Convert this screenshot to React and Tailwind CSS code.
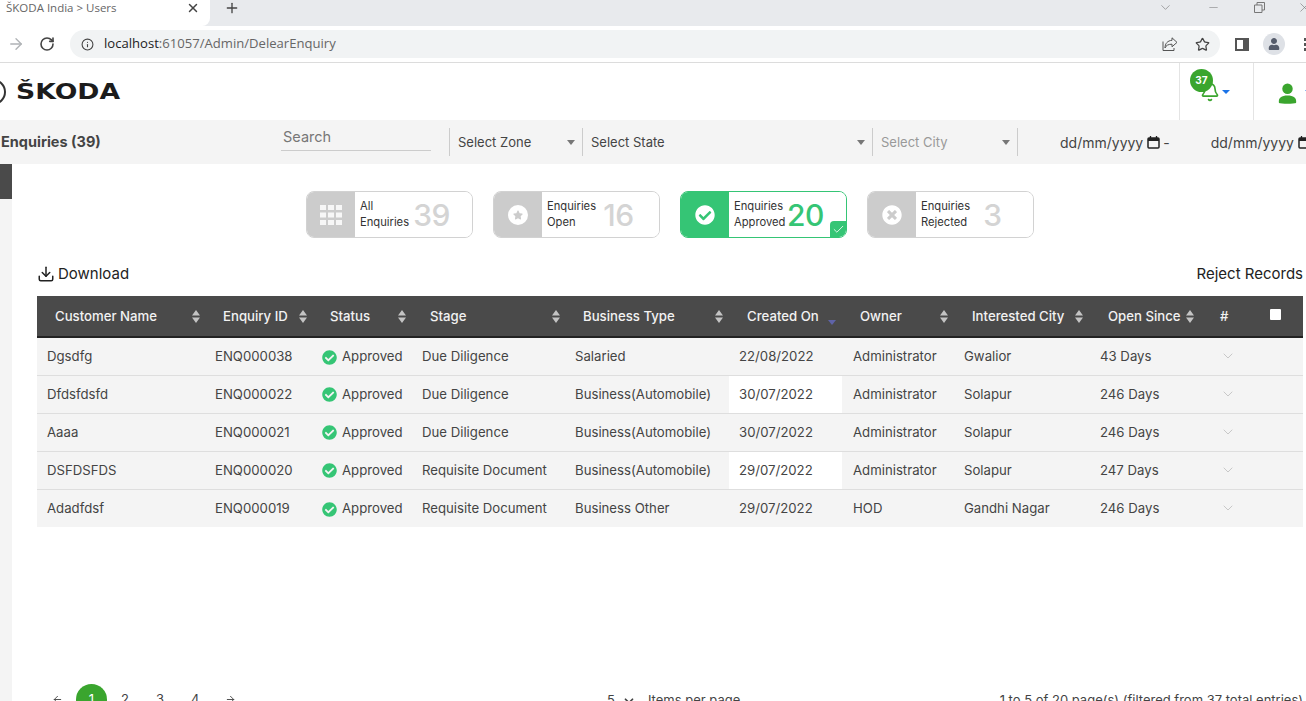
import React from 'react'
import { ArrowRight, RotateCw, Info, Star, ArrowLeft, ChevronDown, X, Plus, Minus, Check, Bell, Download } from 'lucide-react'
import { FaUser, FaCheckCircle, FaTimesCircle, FaStar } from 'react-icons/fa'

const rows = [
  { name: 'Dgsdfg', id: 'ENQ000038', stage: 'Due Diligence', type: 'Salaried', date: '22/08/2022', owner: 'Administrator', city: 'Gwalior', since: '43 Days' },
  { name: 'Dfdsfdsfd', id: 'ENQ000022', stage: 'Due Diligence', type: 'Business(Automobile)', date: '30/07/2022', owner: 'Administrator', city: 'Solapur', since: '246 Days' },
  { name: 'Aaaa', id: 'ENQ000021', stage: 'Due Diligence', type: 'Business(Automobile)', date: '30/07/2022', owner: 'Administrator', city: 'Solapur', since: '246 Days' },
  { name: 'DSFDSFDS', id: 'ENQ000020', stage: 'Requisite Document', type: 'Business(Automobile)', date: '29/07/2022', owner: 'Administrator', city: 'Solapur', since: '247 Days' },
  { name: 'Adadfdsf', id: 'ENQ000019', stage: 'Requisite Document', type: 'Business Other', date: '29/07/2022', owner: 'HOD', city: 'Gandhi Nagar', since: '246 Days' },
]

const headers = [
  { label: 'Customer Name', w: 'w-[168px]', sort: 'w-[146px]' },
  { label: 'Enquiry ID', w: 'w-[107px]', sort: 'w-[85px]' },
  { label: 'Status', w: 'w-[100px]', sort: 'w-[77px]' },
  { label: 'Stage', w: 'w-[153px]', sort: 'w-[131px]' },
  { label: 'Business Type', w: 'w-[164px]', sort: 'w-[141px]' },
  { label: 'Created On', w: 'w-[113px]', sort: 'w-[90px]', active: true },
  { label: 'Owner', w: 'w-[112px]', sort: 'w-[89px]' },
  { label: 'Interested City', w: 'w-[136px]', sort: 'w-[112px]' },
  { label: 'Open Since', w: 'w-[120px]', sort: 'w-[87px]' },
]

const SortIcon = ({ active }) =>
  active ? (
    <svg width="10" height="14" viewBox="0 0 10 14" className="mt-1 shrink-0">
      <path d="M1 8h8l-4 5z" fill="#5f63a8" />
    </svg>
  ) : (
    <svg width="10" height="15" viewBox="0 0 10 15" className="shrink-0">
      <path d="M5 1l4 5.500H1zM5 14L1 8.500h8z" fill="#c4c4c4" />
    </svg>
  )

const Grid = () => (
  <svg width="22" height="20" viewBox="0 0 22 20" fill="#fff" opacity="0.85">
    <rect x="0" y="0" width="6" height="5" /><rect x="8" y="0" width="6" height="5" /><rect x="16" y="0" width="6" height="5" />
    <rect x="0" y="7.500" width="6" height="5" /><rect x="8" y="7.500" width="6" height="5" /><rect x="16" y="7.500" width="6" height="5" />
    <rect x="0" y="15" width="6" height="5" /><rect x="8" y="15" width="6" height="5" /><rect x="16" y="15" width="6" height="5" />
  </svg>
)

const CalendarMark = () => (
  <svg width="13" height="13" viewBox="0 0 13 13" fill="none" className="ml-[4px] shrink-0">
    <rect x="1" y="2" width="11" height="10" stroke="#222" strokeWidth="1.500" rx="1" />
    <rect x="1" y="2" width="11" height="3" fill="#222" />
    <path d="M3.500 0v2M9.500 0v2" stroke="#222" strokeWidth="1.300" />
  </svg>
)

const StatCard = ({ icon, top, bottom, count, active }) => (
  <div className={`w-[167px] h-[47px] flex rounded-lg border overflow-hidden relative ${active ? 'border-[#35c575]' : 'border-[#d2d2d2]'}`}>
    <div className={`w-[48px] shrink-0 flex items-center justify-center ${active ? 'bg-[#35c575]' : 'bg-[#cccccc]'}`}>{icon}</div>
    <div className="flex items-center pl-[5px] bg-white flex-1">
      <div className="text-[11.200px] leading-[16px] text-[#333] w-[52px] whitespace-nowrap pb-[2px]">{top}<br />{bottom}</div>
      <span className={`text-[30px] font-medium leading-none w-[39px] text-center tracking-[-0.5px] ${active ? 'text-[#35c575]' : 'text-[#d4d4d4]'}`}>{count}</span>
    </div>
    {active && (
      <div className="absolute right-0 bottom-0 w-4 h-4 bg-[#35c575] flex items-center justify-center rounded-tl-sm">
        <Check size={13} color="#fff" strokeWidth={1.500} />
      </div>
    )}
  </div>
)

export default function App() {
  return (
    <div className="w-[1306px] h-[701px] overflow-hidden bg-white flex flex-col font-['Inter',sans-serif]">
      {/* browser tabs */}
      <div className="h-[26px] bg-[#e8eaed] flex items-center shrink-0 relative">
        <div className="w-[210px] h-full bg-white rounded-br-lg flex items-center pl-[6px] pr-[10px] pb-[10px] justify-between">
          <span className="text-[11.500px] text-[#666] font-['Open_Sans',sans-serif]">ŠKODA India &gt; Users</span>
          <X size={14} color="#444" strokeWidth={2.500} />
        </div>
        <Plus size={16} color="#444" strokeWidth={2} className="ml-[14px] mb-[10px]" />
        <div className="ml-auto flex items-center text-[#777] pb-[12px]">
          <ChevronDown size={15} strokeWidth={1} className="mr-[34px]" />
          <Minus size={13} strokeWidth={1} className="mr-[34px]" />
          <svg width="11" height="11" viewBox="0 0 11 11" fill="none" stroke="#777" className="mr-[32px]"><path d="M.5 3h7.500v7.500h-7.500zM3 3V.5h7.500V8H8" /></svg>
          <X size={15} strokeWidth={1} className="mr-[-6px]" />
        </div>
      </div>
      {/* browser toolbar */}
      <div className="h-[37px] bg-white border-b border-[#dcdcdc] flex items-center shrink-0">
        <ArrowRight size={18} color="#b0b3b6" strokeWidth={1.800} className="ml-[7px] shrink-0" />
        <RotateCw size={16} color="#444" strokeWidth={2.400} className="ml-[14px] shrink-0" />
        <div className="ml-[15px] w-[1150px] h-[28px] rounded-full bg-[#f1f3f4] flex items-center pl-[11px] pr-[10px] shrink-0">
          <Info size={13} color="#444" />
          <span className="ml-[10px] text-[13.100px] text-[#666] font-['Open_Sans',sans-serif]">
            <span className="text-[#222]">localhost</span>:61057/Admin/DelearEnquiry
          </span>
          <div className="ml-auto flex items-center gap-[17px] text-[#555]">
            <svg width="16" height="14" viewBox="0 0 16 14" fill="none" stroke="#555" strokeWidth="1"><path d="M10 .8l5 4.600-5 4.400V7.200C6 7.200 4 8.500 3 11c0-4.500 2.500-7.300 7-7.700zM1 4.500v9h11v-2.500" /></svg>
            <Star size={15} color="#444" strokeWidth={2} />
          </div>
        </div>
        <div className="ml-[15px] w-[14px] h-[13px] border-[2px] border-[#555] bg-white flex justify-end shrink-0">
          <div className="w-[4px] bg-[#555]" />
        </div>
        <div className="ml-[14px] w-[22px] h-[22px] rounded-full bg-[#dee1e6] flex items-center justify-center shrink-0">
          <FaUser size={12} color="#555c6b" />
        </div>
        <div className="ml-[19px] flex flex-col gap-[2px] shrink-0">
          <span className="w-[3px] h-[3px] bg-[#555]" />
          <span className="w-[3px] h-[3px] bg-[#555]" />
          <span className="w-[3px] h-[3px] bg-[#555]" />
        </div>
      </div>
      {/* app header */}
      <div className="h-[57px] bg-white flex items-stretch shrink-0">
        <div className="flex items-center flex-1 min-w-0">
          <div className="w-[26px] h-[26px] ml-[-20px] mr-[10px] rounded-full border-2 border-[#333] bg-white shrink-0" />
          <span className="text-[21px] font-black text-[#1c1c1c] leading-none origin-left scale-x-[1.27] mt-[2px] font-['DejaVu_Sans',sans-serif]">ŠKODA</span>
        </div>
        <div className="w-[74px] border-l border-[#e4e4e4] relative shrink-0">
          <Bell size={20} color="#3aa52e" strokeWidth={2} className="absolute left-[20px] top-[19px]" />
          <span className="absolute left-[10px] top-[6px] w-[23px] h-[23px] rounded-full bg-[#3aa52e] text-white text-[10px] font-bold flex items-center justify-center">37</span>
          <span className="absolute left-[42px] top-[27px] w-0 h-0 border-x-4 border-x-transparent border-t-[4px] border-t-[#1a73e8]" />
        </div>
        <div className="w-[53px] border-l border-[#e4e4e4] relative shrink-0">
          <svg width="19" height="21" viewBox="0 0 20 22" fill="#3aa52e" className="absolute left-[24px] top-[20px]">
            <circle cx="10" cy="6" r="5.500" /><path d="M1 21c-1-6 3-8 9-8s10 2 9 8c-2 1-16 1-18 0z" />
          </svg>
          <span className="absolute left-[51px] top-[27px] w-0 h-0 border-x-4 border-x-transparent border-t-[4px] border-t-[#1a73e8]" />
        </div>
      </div>
      {/* filter bar */}
      <div className="h-[44px] bg-[#f4f4f4] flex items-center shrink-0 text-[#444]">
        <span className="w-[281px] shrink-0 pl-[1px] text-[14.500px] font-bold text-[#444]">Enquiries (39)</span>
        <div className="w-[150px] shrink-0 h-[27px] border-b border-[#ccc] text-[14.500px] text-[#777] pl-[2px] mb-[9px] flex items-center">Search</div>
        <div className="ml-[18px] w-[133px] shrink-0 h-[28px] border-l border-[#ccc] flex items-center justify-between pl-[8px] pr-[7px] text-[13px]">
          <span className="pt-[1px]">Select Zone</span><span className="w-0 h-0 border-x-[4.500px] border-x-transparent border-t-[5px] border-t-[#777]" />
        </div>
        <div className="w-[290px] shrink-0 h-[28px] border-l border-[#ccc] flex items-center justify-between pl-[8px] pr-[7px] text-[13px]">
          <span className="pt-[1px]">Select State</span><span className="w-0 h-0 border-x-[4.500px] border-x-transparent border-t-[5px] border-t-[#777]" />
        </div>
        <div className="w-[146px] shrink-0 h-[28px] border-x border-[#ccc] flex items-center justify-between pl-[8px] pr-[7px] text-[13px] text-[#999]">
          <span className="pt-[1px]">Select City</span><span className="w-0 h-0 border-x-[4.500px] border-x-transparent border-t-[5px] border-t-[#777]" />
        </div>
        <span className="ml-[42px] text-[14px] whitespace-nowrap shrink-0">dd/mm/yyyy</span>
        <CalendarMark />
        <span className="ml-[3px] text-[14px] shrink-0">-</span>
        <span className="ml-[41px] text-[14px] whitespace-nowrap shrink-0">dd/mm/yyyy</span>
        <CalendarMark />
      </div>
      <div className="flex flex-1 min-h-0">
        {/* collapsed sidebar */}
        <div className="w-[12px] bg-[#f4f4f4] shrink-0">
          <div className="h-[35px] bg-[#4a4a4a]" />
        </div>
        <div className="flex-1 min-w-0 pl-[25px] pr-[3px] flex flex-col">
          <div className="mt-[27px] flex gap-[20px] ml-[269px]">
            <StatCard icon={<Grid />} top="All" bottom="Enquiries" count="39" />
            <StatCard icon={<span className="w-5 h-5 rounded-full bg-white flex items-center justify-center text-[#ccc]"><FaStar size={10} /></span>} top="Enquiries" bottom="Open" count="16" />
            <StatCard active icon={<FaCheckCircle size={20} color="#fff" />} top="Enquiries" bottom="Approved" count="20" />
            <StatCard icon={<FaTimesCircle size={20} color="#fff" />} top="Enquiries" bottom="Rejected" count="3" />
          </div>
          <div className="mt-[26px] h-[20px] flex items-center justify-between text-[#222] text-[15px]">
            <span className="flex items-center gap-[3px]"><Download size={18} color="#222" />Download</span>
            <span>Reject Records</span>
          </div>
          <table className="mt-[12px] w-[1266px] table-fixed border-collapse text-[13.200px] text-[#444]">
            <thead>
              <tr className="h-[41px] bg-[#4a4a4a] border-b-2 border-[#222] text-[#f2f2f2]">
                {headers.map(h => (
                  <th key={h.label} className={`${h.w} p-0 pl-[18px] pt-[2px] font-medium text-[13.200px] text-left`}>
                    <div className={`${h.sort} flex items-center justify-between whitespace-nowrap`}>
                      {h.label}
                      <SortIcon active={h.active} />
                    </div>
                  </th>
                ))}
                <th className="w-[60px] p-0 pl-[10px] pt-[2px] font-medium text-left">#</th>
                <th className="p-0 text-left">
                  <div className="w-[11px] h-[11px] bg-white rounded-[1px] mb-[4px]" />
                </th>
              </tr>
            </thead>
            <tbody>
              {rows.map((r, i) => (
                <tr key={r.id} className={`h-[38px] bg-[#f4f4f4] ${i < rows.length - 1 ? 'border-b border-[#dedede]' : ''}`}>
                  <td className="p-0 pl-[10px] pt-[2px]">{r.name}</td>
                  <td className="p-0 pl-[10px] pt-[2px]">{r.id}</td>
                  <td className="p-0 pl-[10px] pt-[2px]">
                    <span className="flex items-center gap-[5px]"><FaCheckCircle size={15} color="#35c575" />Approved</span>
                  </td>
                  <td className="p-0 pl-[10px] pt-[2px]">{r.stage}</td>
                  <td className="p-0 pl-[10px] pt-[2px]">{r.type}</td>
                  <td className={`p-0 pl-[10px] pt-[2px] ${i === 1 || i === 3 ? 'bg-white' : ''}`}>{r.date}</td>
                  <td className="p-0 pl-[11px] pt-[2px]">{r.owner}</td>
                  <td className="p-0 pl-[10px] pt-[2px]">{r.city}</td>
                  <td className="p-0 pl-[10px] pt-[2px]">{r.since}</td>
                  <td className="p-0 pl-[10px]"><ChevronDown size={16} strokeWidth={1.500} color="#c8c8c8" /></td>
                  <td className="p-0" />
                </tr>
              ))}
            </tbody>
          </table>
          {/* pagination */}
          <div className="mt-[157px] flex items-start text-[13px] text-[#444] h-[40px]">
            <div className="flex items-center ml-[15px]">
              <ArrowLeft size={11} />
              <span className="ml-[13px] w-[31px] h-[31px] rounded-full bg-[#3aa52e] text-white flex items-center justify-center">1</span>
              <span className="ml-[14px] w-2">2</span>
              <span className="ml-[27px] w-2">3</span>
              <span className="ml-[27px] w-2">4</span>
              <ArrowRight size={11} className="ml-[26px]" />
            </div>
            <span className="ml-[371px] mt-[7px] flex items-center"><span>5</span><ChevronDown size={14} strokeWidth={3} className="ml-[7px]" /><span className="ml-[12px]">Items per page</span></span>
            <span className="ml-auto mt-[7px] whitespace-nowrap">1 to 5 of 20 page(s) (filtered from 37 total entries)</span>
          </div>
        </div>
      </div>
    </div>
  )
}
